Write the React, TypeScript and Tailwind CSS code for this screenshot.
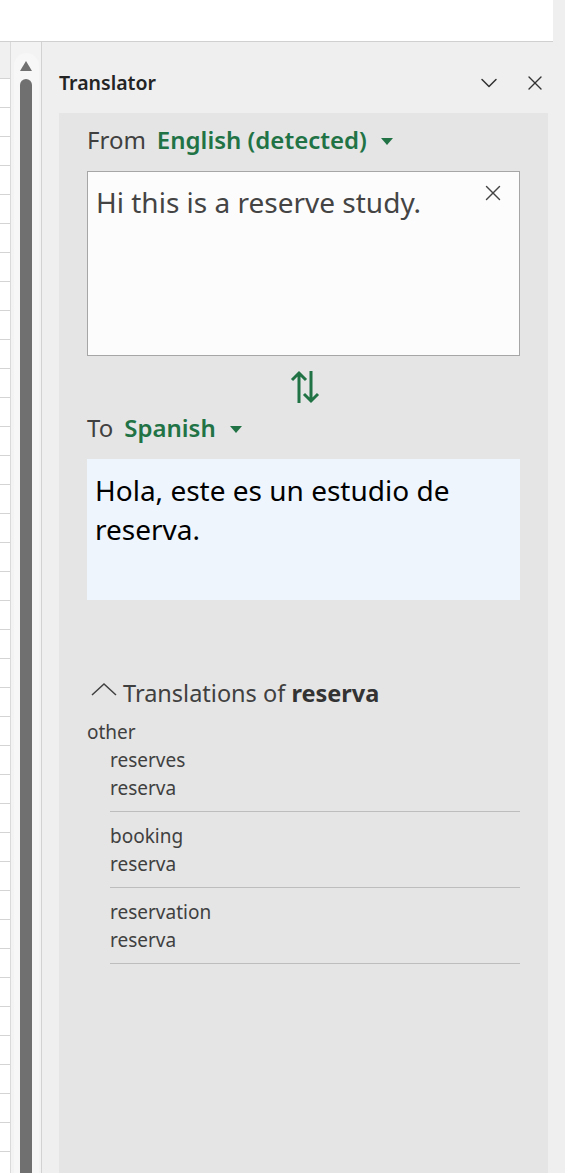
import { ChevronDown, X } from 'lucide-react';

const font = { fontFamily: '"Noto Sans", "Open Sans", sans-serif' };

const entries = [
  { head: 'other', items: [['reserves', 'reserva']] },
  { head: null, items: [['booking', 'reserva']] },
  { head: null, items: [['reservation', 'reserva']] },
];

function Caret() {
  return (
    <svg width="12" height="8" viewBox="0 0 12 8" className="ml-[14px] mt-1">
      <path d="M0 0h12L6 7z" fill="#217346" />
    </svg>
  );
}

function SwapIcon() {
  return (
    <svg width="30" height="34" viewBox="0 0 30 34" fill="none" stroke="#217346" strokeWidth="3">
      <path d="M9 33V3M2 10l7-7 7 7" />
      <path d="M21 1v30M14 24l7 7 7-7" />
    </svg>
  );
}

export default function App() {
  return (
    <div className="flex h-[1173px] w-[565px] flex-col overflow-hidden bg-[#efefef]" style={font}>
      {/* ribbon strip */}
      <div className="flex h-[42px] shrink-0">
        <div className="w-[553px] border-b border-[#d0d0d0] bg-white" />
      </div>

      <div className="flex min-h-0 flex-1">
        {/* sheet cells */}
        <div className="flex w-[11px] shrink-0 flex-col border-r border-[#dadada]">
          <div className="h-[37px] shrink-0 border-b border-[#d4d4d4] bg-[#f0f0f0]" />
          {Array.from({ length: 40 }).map((_, i) => (
            <div key={i} className="h-[29px] shrink-0 border-b border-[#d4d4d4] bg-white" />
          ))}
        </div>

        {/* scrollbar */}
        <div className="flex w-[30px] shrink-0 justify-center bg-[#f3f3f3] pt-[11px]">
          <div className="flex w-[25px] flex-col items-center rounded-t-full bg-[#f7f7f7] pt-[8px]">
            <svg width="12" height="10" viewBox="0 0 12 10">
              <path d="M6 0l6 10H0z" fill="#707070" />
            </svg>
            <div className="mt-[8px] w-[12px] flex-1 rounded-t-md bg-[#707070]" />
          </div>
        </div>

        {/* task pane */}
        <div className="flex min-w-0 flex-1 flex-col border-l border-[#d2d2d2] pl-[17px] pr-[17px]">
          <div className="flex h-[71px] shrink-0 items-center pt-[11px]">
            <span className="text-[19.5px] font-semibold text-[#242424]">Translator</span>
            <div className="ml-auto flex items-center gap-[20px] pr-[1px] text-[#333]">
              <ChevronDown size={28} strokeWidth={1.3} />
              <X size={24} strokeWidth={1.4} />
            </div>
          </div>

          <div className="flex-1 bg-[#e5e5e5] px-[28px] pt-[10px]">
            <div className="flex items-center text-[24px] leading-[34px]">
              <span className="text-[#404040]">From</span>
              <span className="ml-[11px] font-semibold text-[#217346]">English (detected)</span>
              <Caret />
            </div>

            <div className="relative mt-[14px] h-[185px] border border-[#a6a6a6] bg-[#fcfcfc] px-[8px] pt-[11px]">
              <p className="text-[28px] leading-[38px] text-[#444]">Hi this is a reserve study.</p>
              <X size={26} strokeWidth={1.3} className="absolute right-[13px] top-[8px] text-[#444]" />
            </div>

            <div className="mt-[14px] flex justify-center pl-[3px]">
              <SwapIcon />
            </div>

            <div className="mt-[7px] flex items-center text-[24px] leading-[34px]">
              <span className="text-[#404040]">To</span>
              <span className="ml-[11px] font-semibold text-[#217346]">Spanish</span>
              <Caret />
            </div>

            <div className="mt-[14px] h-[141px] bg-[#eef5fd] px-[8px] pt-[12px]">
              <p className="text-[28px] leading-[39px] text-black">Hola, este es un estudio de reserva.</p>
            </div>

            <div className="mt-[77px] flex items-center text-[23.5px] leading-[32px] text-[#404040]">
              <svg width="26" height="16" viewBox="0 0 26 16" fill="none" stroke="#404040" strokeWidth="1.5" className="ml-[4px] mr-[6px] -mt-[6px]">
                <path d="M1 13L13 2l12 11" />
              </svg>
              <span>
                Translations of <b className="font-bold text-[#333]">reserva</b>
              </span>
            </div>

            <div className="mt-[9px] text-[19px] leading-[28px] text-[#404040]">
              {entries.map((e, i) => (
                <div key={i}>
                  {e.head && <div>{e.head}</div>}
                  {e.items.map(([a, b]) => (
                    <div key={a} className="mb-[10px] ml-[23px] border-b border-[#bdbdbd] pb-[9px]">
                      <div>{a}</div>
                      <div>{b}</div>
                    </div>
                  ))}
                </div>
              ))}
            </div>
          </div>
        </div>
      </div>
    </div>
  );
}
